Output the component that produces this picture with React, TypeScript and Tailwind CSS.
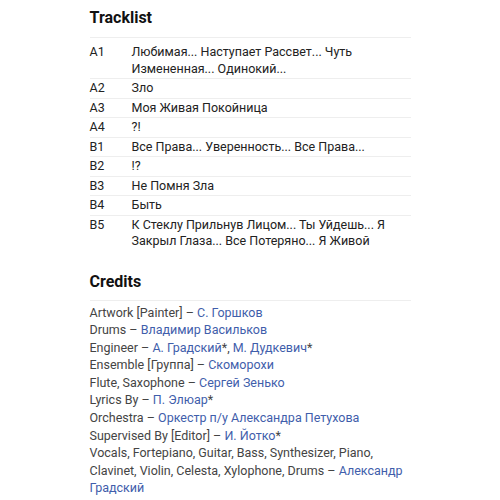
import React from "react"

const tracks = [
  { pos: "A1", title: "Любимая... Наступает Рассвет... Чуть Измененная... Одинокий..." },
  { pos: "A2", title: "Зло" },
  { pos: "A3", title: "Моя Живая Покойница" },
  { pos: "A4", title: "?!" },
  { pos: "B1", title: "Все Права... Уверенность... Все Права..." },
  { pos: "B2", title: "!?" },
  { pos: "B3", title: "Не Помня Зла" },
  { pos: "B4", title: "Быть" },
  { pos: "B5", title: "К Стеклу Прильнув Лицом... Ты Уйдешь... Я Закрыл Глаза... Все Потеряно... Я Живой" },
]

type Credit = { role: string; names: { name: string; star?: boolean }[] }

const credits: Credit[] = [
  { role: "Artwork [Painter]", names: [{ name: "С. Горшков" }] },
  { role: "Drums", names: [{ name: "Владимир Васильков" }] },
  { role: "Engineer", names: [{ name: "А. Градский", star: true }, { name: "М. Дудкевич", star: true }] },
  { role: "Ensemble [Группа]", names: [{ name: "Скоморохи" }] },
  { role: "Flute, Saxophone", names: [{ name: "Сергей Зенько" }] },
  { role: "Lyrics By", names: [{ name: "П. Элюар", star: true }] },
  { role: "Orchestra", names: [{ name: "Оркестр п/у Александра Петухова" }] },
  { role: "Supervised By [Editor]", names: [{ name: "И. Йотко", star: true }] },
  {
    role: "Vocals, Fortepiano, Guitar, Bass, Synthesizer, Piano, Clavinet, Violin, Celesta, Xylophone, Drums",
    names: [{ name: "Александр Градский" }],
  },
]

const App = () => {
  return (
    <div className="min-h-[500px] bg-white font-['Roboto',sans-serif]">
      <div className="mx-auto w-[321px] pt-[6px]">
        <h2 className="text-[16px] font-bold leading-[24px] text-[#111] pb-[7px] border-b border-[#eeeeee]">Tracklist</h2>
        <div className="pt-[5px]">
          {tracks.map((t) => (
            <div key={t.pos} className="flex border-b border-[#eeeeee] last:border-b-0 py-[1px] text-[12.5px] leading-[16.5px] text-[#222]">
              <div className="w-[42px] shrink-0">{t.pos}</div>
              <div>{t.title}</div>
            </div>
          ))}
        </div>

        <h2 className="mt-[19px] text-[16px] font-bold leading-[24px] text-[#111] pb-[6px] border-b border-[#eeeeee]">Credits</h2>
        <div className="pt-[3px] text-[12.5px] leading-[17.6px] text-[#444]">
          {credits.map((c) => (
            <div key={c.role}>
              {c.role} –{" "}
              {c.names.map((n, i) => (
                <span key={n.name}>
                  <a href="#" className="text-[#3f5eab]">{n.name}</a>
                  {n.star ? "*" : ""}
                  {i < c.names.length - 1 ? ", " : ""}
                </span>
              ))}
            </div>
          ))}
        </div>
      </div>
    </div>
  )
}

export default App
